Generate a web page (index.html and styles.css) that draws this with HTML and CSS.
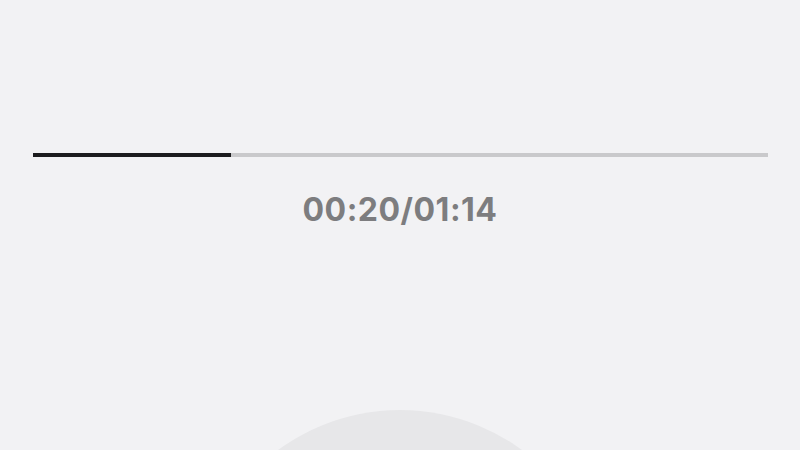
FILE: index.html
```html
<!DOCTYPE html>
<html>
<head>
<meta charset="utf-8">
<link rel="stylesheet" href="styles.css">
</head>
<body>
<main class="player">
  <div class="progress">
    <div class="progress-fill" style="width: 27%"></div>
  </div>
  <div class="time">00:20/01:14</div>
  <div class="disc"></div>
</main>
</body>
</html>
```
FILE: styles.css
```css
html, body {
  margin: 0;
  padding: 0;
  width: 800px;
  height: 450px;
  overflow: hidden;
  background: #f2f2f4;
}
.player {
  display: flex;
  flex-direction: column;
  align-items: center;
  padding-top: 153px;
  height: 450px;
  box-sizing: border-box;
  overflow: hidden;
}
.player > * {
  flex: none;
}
.progress {
  align-self: stretch;
  margin: 0 32px 0 33px;
  height: 4px;
  background: #c9c9cb;
  display: flex;
}
.progress-fill {
  height: 100%;
  background: #1c1c1e;
}
.time {
  margin-top: 36px;
  font-family: "Inter", "Open Sans", sans-serif;
  font-weight: 700;
  font-size: 32px;
  line-height: 34px;
  color: #7d7d7f;
  letter-spacing: 0.5px;
}
.disc {
  margin-top: 183px;
  width: 412px;
  height: 412px;
  border-radius: 50%;
  background: #e7e7e9;
}
```
